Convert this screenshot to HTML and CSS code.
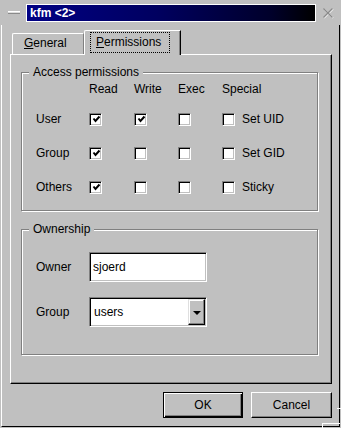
FILE: index.html
```html
<!DOCTYPE html>
<html lang="en">
<head>
    <meta charset="UTF-8">
    <title>kfm &lt;2&gt;</title>
    <link rel="stylesheet" href="styles.css">
</head>
<body>
    <div class="window">
        <div class="titlebar">
            <span class="minimize"></span>
            <div class="caption">kfm &lt;2&gt;</div>
            <svg class="close" width="12" height="12" viewBox="0 0 12 12">
                <path d="M1.5 1.5 L10.5 10.5 M10.5 1.5 L1.5 10.5" stroke="#f4f4f4" stroke-width="1.4" transform="translate(0.6 0.6)"/>
                <path d="M1.5 1.5 L10.5 10.5 M10.5 1.5 L1.5 10.5" stroke="#8a8a8a" stroke-width="1.4"/>
            </svg>
        </div>

        <div class="frame">
            <div class="tabs">
                <div class="tab"><u>G</u>eneral</div>
                <div class="tab active"><span class="focus"><u>P</u>ermissions</span></div>
            </div>

            <div class="panel">
                <div class="group access">
                    <span class="legend">Access permissions</span>
                    <div class="permGrid">
                        <span></span>
                        <span>Read</span>
                        <span>Write</span>
                        <span>Exec</span>
                        <span>Special</span>

                        <span>User</span>
                        <span class="check on"><svg width="9" height="9" viewBox="0 0 9 9"><path d="M1.5 3.5 L3.5 6 L7.5 1.5" fill="none" stroke="#000" stroke-width="2"/></svg></span>
                        <span class="check on"><svg width="9" height="9" viewBox="0 0 9 9"><path d="M1.5 3.5 L3.5 6 L7.5 1.5" fill="none" stroke="#000" stroke-width="2"/></svg></span>
                        <span class="check"></span>
                        <span class="special"><span class="check"></span>Set UID</span>

                        <span>Group</span>
                        <span class="check on"><svg width="9" height="9" viewBox="0 0 9 9"><path d="M1.5 3.5 L3.5 6 L7.5 1.5" fill="none" stroke="#000" stroke-width="2"/></svg></span>
                        <span class="check"></span>
                        <span class="check"></span>
                        <span class="special"><span class="check"></span>Set GID</span>

                        <span>Others</span>
                        <span class="check on"><svg width="9" height="9" viewBox="0 0 9 9"><path d="M1.5 3.5 L3.5 6 L7.5 1.5" fill="none" stroke="#000" stroke-width="2"/></svg></span>
                        <span class="check"></span>
                        <span class="check"></span>
                        <span class="special"><span class="check"></span>Sticky</span>
                    </div>
                </div>

                <div class="group ownership">
                    <span class="legend">Ownership</span>
                    <div class="ownGrid">
                        <span>Owner</span>
                        <div class="field">sjoerd</div>
                        <span>Group</span>
                        <div class="field combo">
                            <span class="comboText">users</span>
                            <span class="comboButton"><span class="arrow"></span></span>
                        </div>
                    </div>
                </div>
            </div>

            <div class="buttons">
                <div class="button default">OK</div>
                <div class="button">Cancel</div>
            </div>
        </div>
    </div>
</body>
</html>
```

FILE: styles.css
```css
html, body {
    margin: 0;
    background-color: #c0c0c0;
    color: #000;
    font-family: "Liberation Sans", Arial, sans-serif;
    font-size: 12px;
}

.window {
    width: 341px;
    height: 428px;
}

/* title bar */
.titlebar {
    display: flex;
    align-items: center;
    height: 25px;
    padding-left: 8px;
    box-sizing: border-box;
}
.minimize {
    width: 12px;
    height: 3px;
    background-color: #dcdcdc;
    border-top: 1px solid #fff;
    border-bottom: 1px solid #8a8a8a;
    box-sizing: border-box;
}
.caption {
    margin-left: 6px;
    width: 290px;
    height: 18px;
    box-sizing: border-box;
    border: 1px solid #fff;
    background: linear-gradient(to right, #000084, #000060 45%, #00002a 85%, #000000);
    color: #fff;
    font-weight: bold;
    line-height: 16px;
    padding-left: 3px;
}
.close {
    margin-left: 6px;
}

/* window frame */
.frame {
    position: relative;
    margin-left: 1px;
    width: 339px;
    height: 402px;
    box-sizing: border-box;
    border-left: 1px solid #fff;
    border-right: 1px solid #000;
    border-bottom: 1px solid #000;
    padding: 5px 7px 8px 8px;
}
/* resize grip in the corner */
.frame::before {
    content: "";
    position: absolute;
    left: 320px;
    top: 398px;
    width: 17px;
    height: 5px;
    border-top: 1px solid #fff;
    border-left: 1px solid #fff;
}
.frame::after {
    content: "";
    position: absolute;
    left: 335px;
    top: 383px;
    width: 4px;
    height: 1px;
    background-color: #fff;
}

/* tabs */
.tabs {
    display: flex;
    align-items: flex-end;
    height: 24px;
    margin-left: 2px;
}
.tab {
    height: 21px;
    width: 72px;
    box-sizing: border-box;
    border-top: 1px solid #fff;
    border-left: 1px solid #fff;
    border-right: 1px solid #808080;
    border-top-left-radius: 2px;
    padding-left: 11px;
    line-height: 19px;
}
.tab.active {
    position: relative;
    z-index: 1;
    width: 97px;
    height: 25px;
    margin-bottom: -1px;
    padding-left: 5px;
    padding-top: 1px;
    border-right: 1px solid #000;
    box-shadow: inset -1px 0 0 #808080;
    background-color: #c0c0c0;
}
.focus {
    display: block;
    width: 80px;
    height: 21px;
    box-sizing: border-box;
    border: 1px dotted #000;
    padding-left: 5px;
    line-height: 18px;
}

/* tab page */
.panel {
    height: 330px;
    box-sizing: border-box;
    border-top: 1px solid #fff;
    border-left: 1px solid #fff;
    border-right: 1px solid #000;
    border-bottom: 1px solid #000;
    box-shadow: inset -1px -1px 0 #808080;
    padding: 17px 0 0 10px;
}

.group {
    position: relative;
    width: 297px;
    box-sizing: border-box;
    border: 1px solid #808080;
    box-shadow: inset 1px 1px 0 #fff, 1px 1px 0 #fff;
}
.group.access {
    height: 139px;
}
.group.ownership {
    height: 126px;
    margin-top: 18px;
}
.legend {
    position: absolute;
    top: -8px;
    left: 7px;
    padding: 0 4px;
    line-height: 14px;
    background-color: #c0c0c0;
}

.permGrid {
    display: grid;
    grid-template-columns: 53px 45px 44px 44px auto;
    grid-template-rows: 27px 34px 34px 34px;
    align-items: center;
    padding: 2px 0 0 14px;
}
.special {
    display: flex;
    align-items: center;
    gap: 7px;
}

.check {
    display: flex;
    align-items: center;
    justify-content: center;
    width: 13px;
    height: 13px;
    box-sizing: border-box;
    background-color: #fff;
    border: 1px solid;
    border-color: #808080 #fff #fff #808080;
    box-shadow: inset 1px 1px 0 #000, inset -1px -1px 0 #c0c0c0;
}
.check svg {
    margin: 1px 0 0 1px;
}

.ownGrid {
    display: grid;
    grid-template-columns: 53px 118px;
    row-gap: 15px;
    align-items: center;
    padding: 22px 0 0 14px;
}
.field {
    height: 30px;
    box-sizing: border-box;
    background-color: #fff;
    border: 1px solid;
    border-color: #808080 #fff #fff #808080;
    box-shadow: inset 1px 1px 0 #000, inset -1px -1px 0 #c0c0c0;
    padding-left: 3px;
    line-height: 28px;
}
.combo {
    display: flex;
    padding: 1px;
}
.comboText {
    flex: 1;
    padding-left: 3px;
    line-height: 26px;
}
.comboButton {
    display: flex;
    align-items: center;
    justify-content: center;
    width: 17px;
    height: 26px;
    box-sizing: border-box;
    background-color: #c0c0c0;
    border: 1px solid;
    border-color: #dfdfdf #000 #000 #dfdfdf;
    box-shadow: inset -1px -1px 0 #808080, inset 1px 1px 0 #fff;
}
.arrow {
    width: 0;
    height: 0;
    border-left: 4px solid transparent;
    border-right: 4px solid transparent;
    border-top: 4px solid #000;
    margin-top: 1px;
}

/* dialog buttons */
.buttons {
    display: flex;
    justify-content: flex-end;
    gap: 8px;
    margin-top: 8px;
}
.button {
    width: 81px;
    height: 26px;
    box-sizing: border-box;
    text-align: center;
    line-height: 24px;
    border: 1px solid;
    border-color: #fff #000 #000 #fff;
    box-shadow: inset -1px -1px 0 #808080;
}
.button.default {
    width: 80px;
    border-color: #000;
    box-shadow: inset 1px 1px 0 #fff, inset -1px -1px 0 #000, inset -2px -2px 0 #808080;
}
```
